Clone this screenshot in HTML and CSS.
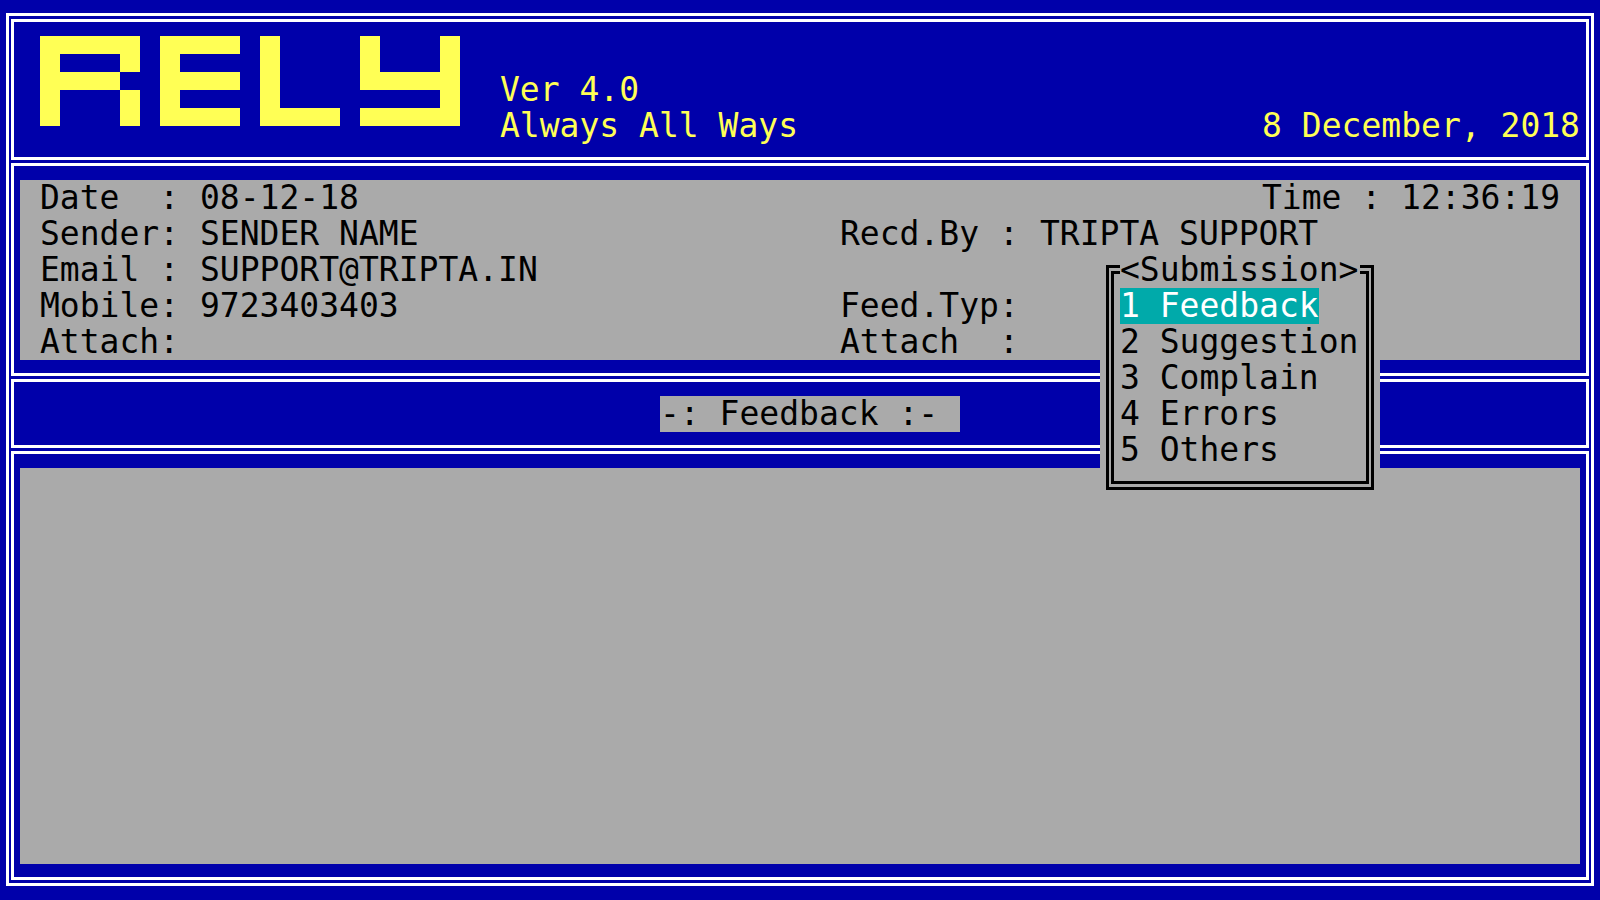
FILE: index.html
```html
<!DOCTYPE html>
<html lang="en">
<head>
<meta charset="utf-8">
<title>RELY - Feedback</title>
<link rel="stylesheet" href="styles.css">
</head>
<body>
<main class="screen">
  <header class="pane banner">
    <svg class="logo" viewBox="0 0 21 5" preserveAspectRatio="none" role="img" aria-label="RELY" shape-rendering="crispEdges">
      <path d="M0 0H5V2H4V1H1V2H4V3H1V5H0ZM4 3H5V5H4Z"/>
      <path d="M6 0H10V1H7V2H10V3H7V4H10V5H6Z"/>
      <path d="M11 0H12V4H15V5H11Z"/>
      <path d="M16 0H17V2H20V0H21V5H16V4H20V3H16Z"/>
    </svg>
    <div class="product">
      <div>Ver 4.0</div>
      <div>Always All Ways</div>
    </div>
    <time class="today" datetime="2018-12-08">8 December, 2018</time>
  </header>

  <section class="pane details">
    <form class="form">
      <div class="column">
        <div class="field"><label for="date">Date  :</label><input id="date" value="08-12-18"></div>
        <div class="field"><label for="sender">Sender:</label><input id="sender" value="SENDER NAME"></div>
        <div class="field"><label for="email">Email :</label><input id="email" value="SUPPORT@TRIPTA.IN"></div>
        <div class="field"><label for="mobile">Mobile:</label><input id="mobile" value="9723403403"></div>
        <div class="field"><label for="attach">Attach:</label><input id="attach"></div>
      </div>
      <div class="column wide-labels">
        <div class="clock">Time : 12:36:19</div>
        <div class="field"><label for="recd">Recd.By :</label><input id="recd" value="TRIPTA SUPPORT"></div>
        <div class="field"></div>
        <div class="field"><label for="type">Feed.Typ:</label><input id="type"></div>
        <div class="field"><label for="attach2">Attach  :</label><input id="attach2"></div>
      </div>
      <div class="popup">
        <div class="popup-title">&lt;Submission&gt;</div>
        <div class="menu">
          <button type="button" class="item selected">1 Feedback</button>
          <button type="button" class="item">2 Suggestion</button>
          <button type="button" class="item">3 Complain</button>
          <button type="button" class="item">4 Errors</button>
          <button type="button" class="item">5 Others</button>
        </div>
      </div>
    </form>
  </section>

  <section class="pane heading">
    <h1 class="heading-text">-: Feedback :- </h1>
  </section>

  <section class="pane message">
    <textarea class="editor" aria-label="Feedback"></textarea>
  </section>
</main>
</body>
</html>
```
FILE: styles.css
```css
* {
  box-sizing: border-box;
}

body {
  margin: 0;
  min-height: 100vh;
  padding: 13px 6px 14px;
  display: flex;
  background: #0000aa;
  color: #000;
  font: 33px/36px "DejaVu Sans Mono", monospace;
}

.screen {
  flex: 1;
  display: flex;
  flex-direction: column;
  gap: 3px;
  padding: 3px 2px;
  border: 3px solid #fff;
}

.pane {
  border: 3px solid #fff;
  padding: 14px 6px 13px;
}

.banner {
  display: flex;
  align-items: flex-end;
  color: #ffff55;
}

.logo {
  width: 420px;
  height: 90px;
  margin: 0 40px 18px 20px;
  fill: #ffff55;
}

.today {
  margin-left: auto;
}

.form {
  position: relative;
  display: grid;
  grid-template-columns: 10fr 9fr;
  padding: 0 20px;
  background: #aaa;
}

.field {
  display: flex;
  height: 36px;
}

.field label {
  flex: none;
  width: 160px;
  white-space: pre;
}

.wide-labels label {
  width: 200px;
}

.field input {
  flex: 1;
  min-width: 0;
  height: 36px;
  padding: 0;
  border: 0;
  background: none;
  color: inherit;
  font: inherit;
  outline: 0;
}

.clock {
  text-align: right;
}

.popup {
  position: absolute;
  top: 72px;
  right: 200px;
  z-index: 1;
  width: 280px;
  padding: 13px 6px 14px;
  background: #aaa;
}

.popup-title {
  position: absolute;
  top: 0;
  left: 20px;
  width: 240px;
  background: #aaa;
}

.menu {
  display: flex;
  flex-direction: column;
  align-items: flex-start;
  padding: 14px 0 13px 6px;
  border: double #000;
  border-width: 9px 8px;
}

.item {
  height: 36px;
  padding: 0;
  border: 0;
  background: none;
  color: inherit;
  font: inherit;
  white-space: pre;
}

.item.selected {
  background: #00aaaa;
  color: #fff;
}

.heading {
  display: flex;
  justify-content: center;
  padding-left: 26px;
}

.heading-text {
  width: 300px;
  margin: 0;
  background: #aaa;
  font: inherit;
  white-space: pre;
}

.message {
  flex: 1;
  display: flex;
}

.editor {
  flex: 1;
  padding: 0 20px;
  border: 0;
  background: #aaa;
  color: inherit;
  font: inherit;
  resize: none;
  outline: 0;
}
```
